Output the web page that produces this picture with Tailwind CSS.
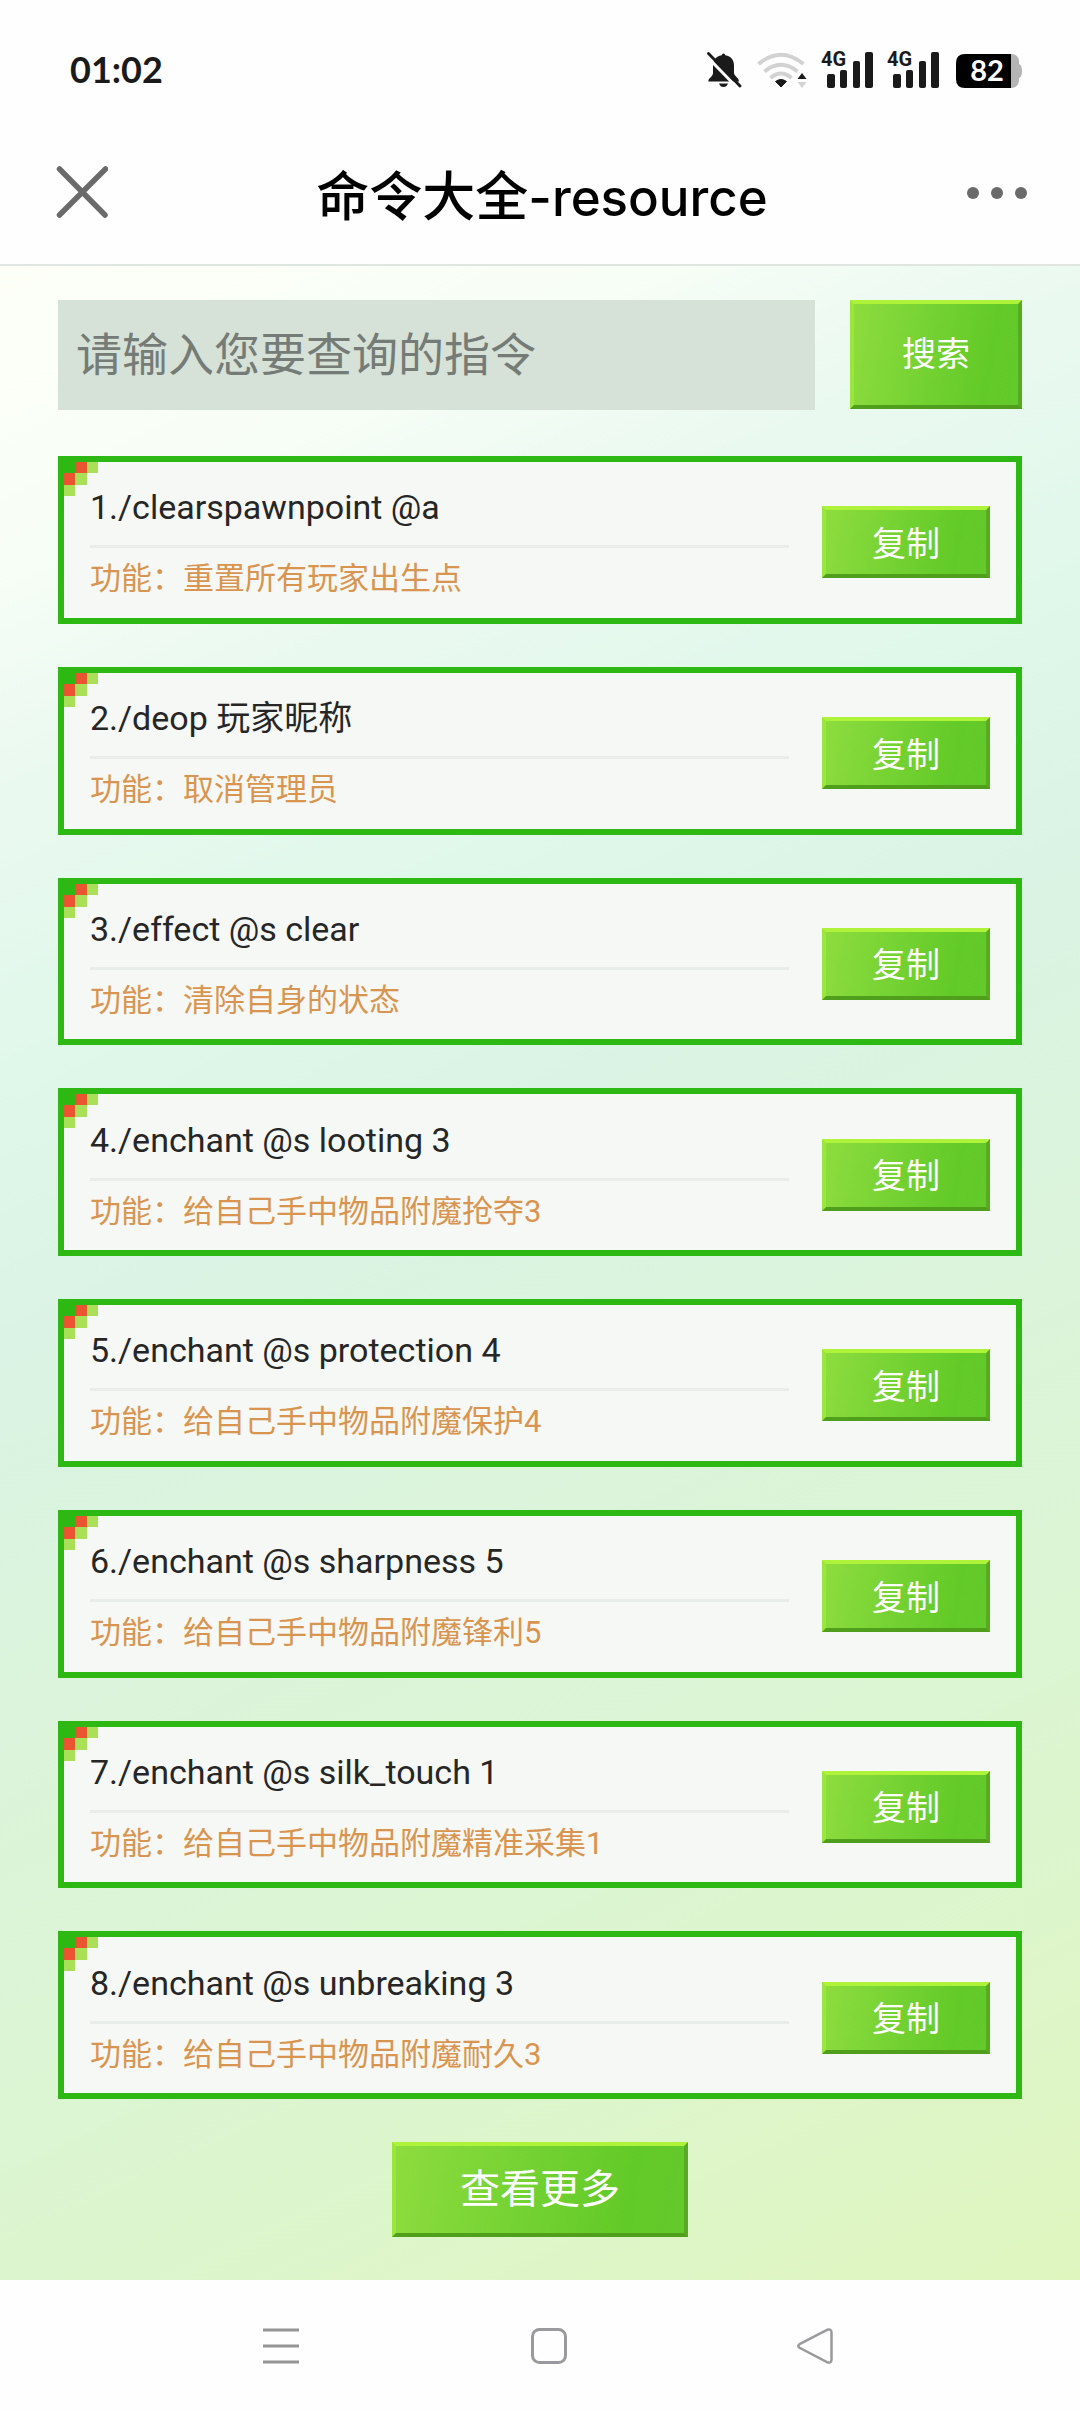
<!DOCTYPE html>
<html lang="zh-CN">
<head>
<meta charset="utf-8">
<meta name="viewport" content="width=device-width, initial-scale=1">
<title>命令大全-resource</title>
<script src="https://cdn.jsdelivr.net/npm/@tailwindcss/browser@4"></script>
</head>
<body class="flex min-h-screen flex-col bg-[#fefefe] font-[Roboto,'Noto_Sans_CJK_SC',sans-serif] text-[#262626]">

<!-- status bar -->
<div class="flex h-[120px] items-center justify-between pt-[10px] pr-[58px] pl-[70px]">
  <span class="pt-2 font-[Lato] text-[36px] leading-10 font-bold text-[#1a1a1a]">01:02</span>
  <div class="flex items-end">
    <svg class="mr-[15px] h-9 w-9" viewBox="0 0 36 36" fill="#1a1a1a" aria-hidden="true">
      <path d="M17.500 1.500q1.600 0 1.800 1.700c6 .9 8.700 5 8.700 10.300v7.500c0 3 5 5 5 8.500H2.500c-1-3 4.300-4.500 4.500-8.500v-7.500C7 8.200 10 4.100 15.700 3.200q.2-1.700 1.800-1.700zM13 31.500h9q-1.300 3.500-4.500 3.500t-4.500-3.500z"/>
      <path d="M0 3.500 32 36.500" stroke="#fefefe" stroke-width="3"/>
      <path d="M2.500 1.500 34 34" stroke="#1a1a1a" stroke-width="2.800" stroke-linecap="round"/>
    </svg>
    <svg class="mr-3 h-9 w-[52px]" viewBox="0 0 52 36" fill="none" aria-hidden="true">
      <g stroke="#d2d2d2" stroke-width="4">
        <path d="M1.500 12Q24 -6.500 46.500 12"/>
        <path d="M7.500 19.500Q24 6 40.500 19.500"/>
        <path d="M13.500 26Q24 17 34.500 26"/>
      </g>
      <path d="M18.500 29.500Q24 25.500 29.500 29.500L24 35z" fill="#1a1a1a" stroke="#1a1a1a" stroke-linejoin="round"/>
      <path d="M40.500 27 45 21l4.500 6z" fill="#1a1a1a"/>
      <path d="M40.500 30 45 36l4.500-6z" fill="#d2d2d2"/>
    </svg>
    <svg class="mr-[14px] h-[46px] w-[52px]" viewBox="0 -8 52 46" fill="#1a1a1a" aria-hidden="true">
      <text x="0" y="16" font-family="Roboto" font-size="20" font-weight="700">4G</text>
      <rect x="6" y="24" width="8" height="14" rx="2"/><rect x="19" y="20" width="7" height="18" rx="2"/>
      <rect x="32" y="11" width="7" height="27" rx="2"/><rect x="44" y="2" width="8" height="36" rx="2"/>
    </svg>
    <svg class="mr-[17px] h-[46px] w-[52px]" viewBox="0 -8 52 46" fill="#1a1a1a" aria-hidden="true">
      <text x="0" y="16" font-family="Roboto" font-size="20" font-weight="700">4G</text>
      <rect x="6" y="24" width="8" height="14" rx="2"/><rect x="19" y="20" width="7" height="18" rx="2"/>
      <rect x="32" y="11" width="7" height="27" rx="2"/><rect x="44" y="2" width="8" height="36" rx="2"/>
    </svg>
    <svg class="h-[40px] w-[66px]" viewBox="0 -6 66 40" aria-hidden="true">
      <path d="M55 0q7 0 8 7v3q3 1 3 7t-3 7v3q-1 7-8 7z" fill="#b4b4b4"/>
      <path d="M9 0H55V34H9q-9 0-9-9V9q0-9 9-9z" fill="#000"/>
      <text x="31" y="27" text-anchor="middle" font-family="Lato" font-size="29" font-weight="700" fill="#fff">82</text>
    </svg>
  </div>
</div>

<!-- title bar -->
<header class="grid h-[146px] grid-cols-[1fr_auto_1fr] items-center border-b-2 border-[#dfe5df] pr-[52px] pb-[1px] pl-[56px]">
  <button type="button" aria-label="关闭" class="justify-self-start">
    <svg class="h-[52px] w-[52px]" viewBox="0 0 52 52" fill="none" stroke="#6a6a6a" stroke-width="5.500" stroke-linecap="round"><path d="M3.500 3 49 49M49.500 3 3.500 49"/></svg>
  </button>
  <h1 class="pt-2 font-['Noto_Sans_CJK_SC',sans-serif] text-[53px] leading-[64px] font-medium text-black">命令大全<span class="font-[Inter] text-[51px]">-resource</span></h1>
  <button type="button" aria-label="更多" class="justify-self-end pt-[2px]">
    <svg class="h-4 w-[62px]" viewBox="0 0 62 16" fill="#6a6a6a"><circle cx="7" cy="8" r="6"/><circle cx="31" cy="8" r="6"/><circle cx="55" cy="8" r="6"/></svg>
  </button>
</header>

<main class="flex flex-1 flex-col gap-[43px] bg-linear-[155deg,#fdfff7_0%,#f7fef6_12%,#ebf9f0_20%,#e0f8ea_32%,#daf3e4_43%,#dbf4dc_56%,#dcf5d2_75%,#dff6bf_100%] px-[58px] pt-[34px] pb-[43px]">
  <form class="flex gap-[35px] pb-[3px]">
    <input type="search" aria-label="指令" placeholder="请输入您要查询的指令" class="h-[110px] min-w-0 flex-1 bg-[#d6e1d7] px-[18px] font-[Roboto,'Noto_Sans_CJK_SC',sans-serif] text-[46px] placeholder:text-[#757b76]">
    <button type="button" class="h-[109px] w-[172px] border-4 border-t-[#aef23a] border-r-[#56ab20] border-b-[#4f9f1c] border-l-[#9be63c] bg-linear-[100deg,#8edc3e,#74d232_45%,#62ca28_80%,#64c92c] text-[34px] text-white">搜索</button>
  </form>

  <ol id="list" class="flex flex-1 flex-col gap-[43px]"></ol>

  <button type="button" class="h-[95px] w-[296px] self-center border-4 border-t-[#aef23a] border-r-[#56ab20] border-b-[#4f9f1c] border-l-[#9be63c] bg-linear-[100deg,#8edc3e,#74d232_45%,#62ca28_80%,#64c92c] text-[40px] text-white">查看更多</button>
</main>

<!-- system navigation -->
<nav class="grid h-[132px] grid-cols-3 place-items-center pr-[130px] pl-[148px]">
  <button type="button" aria-label="菜单"><svg class="h-[38px] w-[38px]" viewBox="0 0 38 38" stroke="#949494" stroke-width="3"><path d="M0 3H36M0 19H36M0 35H36"/></svg></button>
  <button type="button" aria-label="主页"><svg class="h-[38px] w-[38px]" viewBox="0 0 38 38" fill="none" stroke="#9a9a9e" stroke-width="3"><rect x="2.500" y="2.500" width="33" height="33" rx="7"/></svg></button>
  <button type="button" aria-label="返回"><svg class="h-[38px] w-[38px]" viewBox="0 0 38 38" fill="none" stroke="#9a9a9e" stroke-width="2.500"><path d="M2.500 17.200 30 2.800q4.500-1.500 4.500 2.700V32.500q0 4.200-4.500 2.700L2.500 20.800q-2.500-1.800 0-3.600z"/></svg></button>
</nav>

<template id="row">
  <li class="relative flex flex-1 items-center border-6 border-[#2eb814] bg-[#f5f8f5] px-[26px]">
    <svg class="absolute top-0 left-0 h-[34px] w-[34px]" viewBox="0 0 3 3" shape-rendering="crispEdges" aria-hidden="true">
      <rect width="1" height="1" fill="#2eb814"/>
      <path d="M1 0h1v1h-1zM0 1h1v1h-1z" fill="#eb5430"/>
      <path d="M2 0h1v1h-1zM1 1h1v1h-1zM0 2h1v1h-1z" fill="#aae058"/>
    </svg>
    <div class="min-w-0 flex-1 pt-1">
      <p class="cmd border-b-3 border-[#e9edea] pb-[14px] text-[34px] leading-[48px]"></p>
      <p class="desc pt-[10px] text-[31px] leading-[42px] text-[#d9954f]"></p>
    </div>
    <button type="button" class="mt-[5px] ml-[33px] h-[72px] w-[168px] border-4 border-t-[#aef23a] border-r-[#56ab20] border-b-[#4f9f1c] border-l-[#9be63c] bg-linear-[100deg,#8edc3e,#74d232_45%,#62ca28_80%,#64c92c] pt-1 text-[34px] text-white">复制</button>
  </li>
</template>
<script>
  const rows = [
    ["/clearspawnpoint @a", "重置所有玩家出生点"],
    ["/deop 玩家昵称", "取消管理员"],
    ["/effect @s clear", "清除自身的状态"],
    ["/enchant @s looting 3", "给自己手中物品附魔抢夺3"],
    ["/enchant @s protection 4", "给自己手中物品附魔保护4"],
    ["/enchant @s sharpness 5", "给自己手中物品附魔锋利5"],
    ["/enchant @s silk_touch 1", "给自己手中物品附魔精准采集1"],
    ["/enchant @s unbreaking 3", "给自己手中物品附魔耐久3"],
  ];
  const list = document.getElementById("list");
  const tpl = document.getElementById("row");
  rows.forEach(([cmd, desc], i) => {
    const node = tpl.content.cloneNode(true);
    node.querySelector(".cmd").textContent = `${i + 1}.${cmd}`;
    node.querySelector(".desc").textContent = `功能：${desc}`;
    list.append(node);
  });
</script>
</body>
</html>
